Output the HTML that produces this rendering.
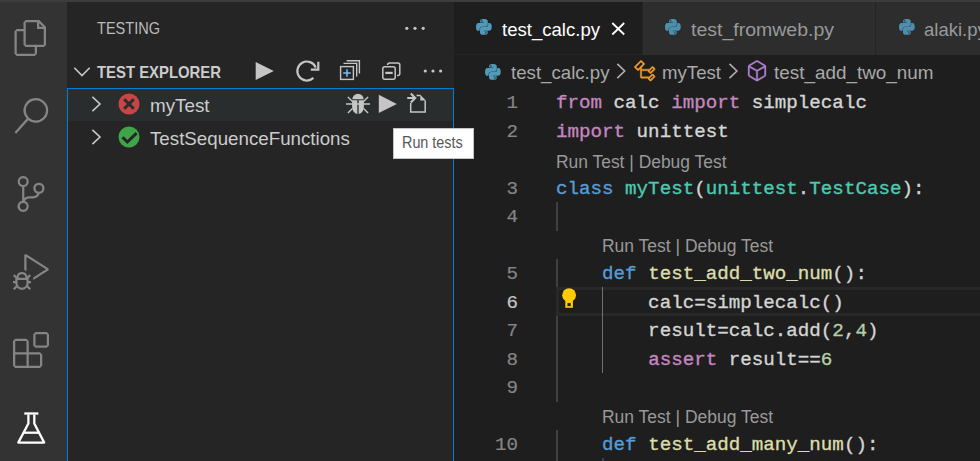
<!DOCTYPE html><html><head><meta charset="utf-8"><title>Testing</title><style>
*{box-sizing:border-box}
html,body{margin:0;padding:0;background:#1e1e1e;overflow:hidden}
#root{position:relative;width:980px;height:461px;overflow:hidden;background:#1e1e1e;font-family:"Liberation Sans",sans-serif}
.a{position:absolute}
.t{position:absolute;white-space:pre;line-height:1;transform-origin:0 50%}
.c{position:absolute;white-space:pre;font:19.2px/28.5px "Liberation Mono",monospace;color:#d4d4d4;left:556px;height:28.5px;-webkit-text-stroke:0.35px}
.ln{position:absolute;white-space:pre;font:19.2px/28.5px "Liberation Mono",monospace;color:#858585;-webkit-text-stroke:0.2px;width:64px;left:454px;text-align:right;height:28.5px}
.k{color:#c586c0}.b{color:#569cd6}.g{color:#4ec9b0}.f{color:#dcdcaa}.n{color:#b5cea8}
svg{position:absolute;overflow:visible}
</style></head><body><div id="root">
<div class="a" style="left:0;top:0;width:980px;height:2px;background:#3c3c3c"></div>
<div class="a" style="left:0;top:2px;width:67px;height:459px;background:#333333"></div>
<div class="a" style="left:67px;top:2px;width:387px;height:459px;background:#252526"></div>
<div class="a" style="left:454px;top:2px;width:526px;height:52.5px;background:#252526"></div>
<div class="a" style="left:454px;top:2px;width:188px;height:52px;background:#1e1e1e"></div>
<div class="a" style="left:643px;top:2px;width:232px;height:52.5px;background:#2d2d2d"></div>
<div class="a" style="left:876px;top:2px;width:104px;height:52.5px;background:#2d2d2d"></div>
<div class="a" style="left:67px;top:88px;width:387px;height:33px;background:#2a2d2e"></div>
<div class="a" style="left:67px;top:88px;width:387px;height:380px;border:1.5px solid #007fd4"></div>
<div class="a" style="left:392.6px;top:127.6px;width:81.6px;height:31.2px;background:#ffffff;border:1px solid #c4c4c4"></div>
<div class="a" style="left:556px;top:287.2px;width:430px;height:28.8px;border:3px solid #282828"></div>
<div class="a" style="left:556px;top:202px;width:1.5px;height:28.5px;background:#404040"></div>
<div class="a" style="left:556px;top:259px;width:1.5px;height:28.2px;background:#404040"></div>
<div class="a" style="left:556px;top:316px;width:1.5px;height:85.5px;background:#404040"></div>
<div class="a" style="left:556px;top:430px;width:1.5px;height:40px;background:#404040"></div>
<div class="a" style="left:601.8px;top:287px;width:1.5px;height:85.5px;background:#707070"></div>
<div class="a" style="left:602px;top:458px;width:1.5px;height:10px;background:#404040"></div>
<div class="t" id="t_testing" style="left:96.5px;top:28.4px;font-size:16.5px;font-weight:400;color:#bbbbbb;transform:translateY(-50%) scaleX(0.8809)">TESTING</div>
<div class="t" id="t_explorer" style="left:96.5px;top:71.5px;font-size:16.5px;font-weight:700;color:#cccccc;transform:translateY(-50%) scaleX(0.9016)">TEST EXPLORER</div>
<div class="t" id="t_mytest" style="left:149.8px;top:105px;font-size:19px;font-weight:400;color:#cccccc;transform:translateY(-50%) scaleX(0.9902)">myTest</div>
<div class="t" id="t_tsf" style="left:149.8px;top:138px;font-size:19px;font-weight:400;color:#cccccc;transform:translateY(-50%) scaleX(0.9857)">TestSequenceFunctions</div>
<div class="t" id="t_tip" style="left:402.0px;top:143.3px;font-size:15.6px;font-weight:400;color:#575757;transform:translateY(-50%) scaleX(0.9214)">Run tests</div>
<div class="t" id="t_tab1" style="left:502.0px;top:29px;font-size:19px;font-weight:400;color:#ffffff;transform:translateY(-50%) scaleX(0.9768)">test_calc.py</div>
<div class="t" id="t_tab2" style="left:690.5px;top:29px;font-size:19px;font-weight:400;color:#999999;transform:translateY(-50%) scaleX(1.0258)">test_fromweb.py</div>
<div class="t" id="t_tab3" style="left:924.2px;top:29px;font-size:19px;font-weight:400;color:#999999;transform:translateY(-50%) scaleX(0.9733)">alaki.py</div>
<div class="t" id="t_bc1" style="left:511.0px;top:72px;font-size:19px;font-weight:400;color:#a9a9a9;transform:translateY(-50%) scaleX(0.9818)">test_calc.py</div>
<div class="t" id="t_bc2" style="left:661.5px;top:72px;font-size:19px;font-weight:400;color:#a9a9a9;transform:translateY(-50%) scaleX(0.9803)">myTest</div>
<div class="t" id="t_bc3" style="left:773.5px;top:72px;font-size:19px;font-weight:400;color:#a9a9a9;transform:translateY(-50%) scaleX(0.9934)">test_add_two_num</div>
<div class="t" id="t_cl1" style="left:556.0px;top:163.0px;font-size:17.5px;font-weight:400;color:#999999;transform:translateY(-50%) scaleX(0.9957)">Run Test | Debug Test</div>
<div class="t" id="t_cl2" style="left:602.0px;top:247.0px;font-size:17.5px;font-weight:400;color:#999999;transform:translateY(-50%) scaleX(0.9986)">Run Test | Debug Test</div>
<div class="t" id="t_cl3" style="left:602.0px;top:418.0px;font-size:17.5px;font-weight:400;color:#999999;transform:translateY(-50%) scaleX(0.9986)">Run Test | Debug Test</div>
<div class="ln" style="top:89.30px">1</div>
<div class="c" style="top:89.30px"><span class="k">from</span> calc <span class="k">import</span> simplecalc</div>
<div class="ln" style="top:117.80px">2</div>
<div class="c" style="top:117.80px"><span class="k">import</span> unittest</div>
<div class="ln" style="top:174.80px">3</div>
<div class="c" style="top:174.80px"><span class="b">class</span> <span class="g">myTest</span>(<span class="g">unittest</span>.<span class="g">TestCase</span>):</div>
<div class="ln" style="top:203.30px">4</div>
<div class="ln" style="top:260.30px">5</div>
<div class="c" style="top:260.30px">    <span class="b">def</span> <span class="f">test_add_two_num</span>():</div>
<div class="ln" style="top:288.80px;color:#c6c6c6">6</div>
<div class="c" style="top:288.80px">        calc=simplecalc()</div>
<div class="ln" style="top:317.30px">7</div>
<div class="c" style="top:317.30px">        result=calc.add(<span class="n">2</span>,<span class="n">4</span>)</div>
<div class="ln" style="top:345.80px">8</div>
<div class="c" style="top:345.80px">        <span class="k">assert</span> result==<span class="n">6</span></div>
<div class="ln" style="top:374.30px">9</div>
<div class="ln" style="top:431.30px">10</div>
<div class="c" style="top:431.30px">    <span class="b">def</span> <span class="f">test_add_many_num</span>():</div>
<!-- activity bar icons -->
<svg style="left:13px;top:20px" width="36" height="36" viewBox="0 0 24 24" fill="#858585"><path d="M17.5 0h-9L7 1.5V6H2.5L1 7.5v15.07L2.5 24h12.07L16 22.57V18h4.7l1.3-1.43V4.5L17.5 0zm0 2.12l2.38 2.38H17.5V2.12zm-3 20.38h-12v-15H7v9.07L8.500 18h6v4.500zm6-6h-12v-15H16V6h4.500v10.500z"/></svg>
<svg style="left:13px;top:98px" width="36" height="36" viewBox="0 0 24 24" fill="#858585"><path d="M15.250 0a8.250 8.250 0 0 0-6.180 13.720L1 22.880l1.120 1 8.050-9.120A8.251 8.251 0 1 0 15.250.010V0zm0 15a6.750 6.750 0 1 1 0-13.500 6.750 6.750 0 0 1 0 13.500z"/></svg>
<svg style="left:13px;top:176px" width="36" height="36" viewBox="0 0 24 24" fill="#858585"><path d="M21.007 8.222A3.738 3.738 0 0 0 15.045 5.200a3.737 3.737 0 0 0 1.156 6.583 2.988 2.988 0 0 1-2.668 1.670h-2.990a4.456 4.456 0 0 0-2.989 1.165V7.400a3.737 3.737 0 1 0-1.494 0v9.117a3.776 3.776 0 1 0 1.816.099 2.990 2.990 0 0 1 2.668-1.667h2.990a4.484 4.484 0 0 0 4.223-3.039 3.736 3.736 0 0 0 3.250-3.687zM4.565 3.738a2.242 2.242 0 1 1 4.484 0 2.242 2.242 0 0 1-4.484 0zm4.484 16.441a2.242 2.242 0 1 1-4.484 0 2.242 2.242 0 0 1 4.484 0zm8.221-9.715a2.242 2.242 0 1 1 0-4.485 2.242 2.242 0 0 1 0 4.485z"/></svg>
<svg style="left:13px;top:254px" width="36" height="36" viewBox="0 0 24 24" fill="#858585"><path d="M10.940 13.500l-1.320 1.320a3.730 3.730 0 0 0-7.240 0L1.060 13.500 0 14.560l1.720 1.720-.220.220V18H0v1.500h1.500v.080c.077.489.214.966.410 1.420L0 22.940 1.060 24l1.650-1.650A4.308 4.308 0 0 0 6 24a4.310 4.310 0 0 0 3.290-1.650L10.940 24 12 22.940 10.090 21c.198-.464.336-.951.410-1.450v-.100H12V18h-1.500v-1.500l-.220-.220L12 14.560l-1.060-1.060zM6 13.500a2.250 2.250 0 0 1 2.250 2.250h-4.500A2.250 2.250 0 0 1 6 13.500zm3 6a3.330 3.330 0 0 1-3 3 3.330 3.330 0 0 1-3-3v-2.250h6v2.250zm14.760-9.900v1.260L13.500 17.370V15.600l8.500-5.370L9 2v9.460a5.070 5.070 0 0 0-1.500-.720V.630L8.640 0l15.120 9.600z"/></svg>
<svg style="left:13px;top:332px" width="36" height="36" viewBox="0 0 24 24" fill="#858585"><path d="M13.500 1.500L15 0h7.500L24 1.500V9l-1.500 1.500H15L13.500 9V1.500zm1.500 0V9h7.500V1.500H15zM0 15V6l1.500-1.500H9L10.500 6v7.500H18l1.500 1.500v7.500L18 24H1.500L0 22.500V15zm9-1.500V6H1.500v7.500H9zM9 15H1.500v7.500H9V15zm1.500 7.500H18V15h-7.500v7.500z"/></svg>
<!-- beaker -->
<svg style="left:0;top:0" width="980" height="461" viewBox="0 0 980 461" fill="none" stroke="#ffffff" stroke-width="2.3" stroke-linejoin="round" stroke-linecap="butt">
<path d="M24.300 413.500H38.400"/>
<path d="M28.400 414.500V423.500L18.300 442.600H44.200L34.300 423.500V414.500"/>
<path d="M23.500 432.700H39.300"/>
</svg>
<!-- sidebar icons (absolute coords) -->
<svg style="left:0;top:0" width="980" height="461" viewBox="0 0 980 461">
<g fill="#c5c5c5">
<circle cx="406.800" cy="28.300" r="1.600"/><circle cx="415" cy="28.300" r="1.600"/><circle cx="423.200" cy="28.300" r="1.600"/>
<circle cx="425.300" cy="71" r="1.600"/><circle cx="433" cy="71" r="1.600"/><circle cx="440.600" cy="71" r="1.600"/>
<path d="M255.700 61.900L273.800 71L255.700 80.100Z"/>
<path d="M378.800 94.800L396.800 104L378.800 113.100Z"/>
</g>
<g fill="none" stroke="#c8c8c8" stroke-width="1.600">
<path d="M74.300 67.800L82 75.600L89.700 67.800"/>
<path d="M92.400 96.900L100 104L92.400 111.100"/>
<path d="M92.400 129.900L100 137L92.400 144.100"/>
</g>
<!-- refresh -->
<g fill="none" stroke="#c5c5c5" stroke-width="2.200">
<path d="M315.700 67.600A9.500 9.500 0 1 0 313.400 77.900"/>
<path d="M318.300 61.800V69.600H310.800"/>
</g>
<!-- expand all -->
<g fill="none" stroke="#c5c5c5" stroke-width="1.400">
<rect x="340.600" y="66.600" width="12.800" height="12.800"/>
<path d="M343.500 63.400H356.700V76.600"/>
<path d="M346.700 60.800H359.400V73.500"/>
</g>
<path d="M343.200 73H350.800M347 69.200V76.800" stroke="#75beff" stroke-width="1.500" fill="none"/>
<!-- collapse all -->
<g fill="none" stroke="#c5c5c5" stroke-width="1.500">
<rect x="382.800" y="66.800" width="12.400" height="12.400" rx="2"/>
<path d="M387.600 64V65.100Q387.600 63.100 389.600 63.100H397.800Q399.800 63.100 399.800 65.100V73.400Q399.800 75.400 397.800 75.400H397"/>
<path d="M385.300 72.900H392.700" stroke-width="2.200"/>
</g>
<!-- bug -->
<g fill="#c5c5c5">
<path d="M352.300 99.300A5.700 5.500 0 0 1 363.700 99.300Z"/>
<path d="M352.100 100.300H357.300V113.900A5.800 7 0 0 1 352.100 107Z"/>
<path d="M363.900 100.300H358.700V113.900A5.800 7 0 0 0 363.900 107Z"/>
</g>
<g fill="none" stroke="#c5c5c5" stroke-width="1.400">
<path d="M346 104H370M347.900 97L352.500 101.500M368.100 97L363.500 101.500M352.500 108.500L347.900 113M363.500 108.500L368.100 113"/>
</g>
<!-- go to file -->
<g fill="none" stroke="#c5c5c5" stroke-width="1.500">
<path d="M410.700 103V112H425.200V100.500"/>
<path d="M416.500 95.500H420.500"/>
<path d="M407.200 98H414.500M410.800 93.600L415.200 98L410.800 102.400" stroke-width="2.100"/>
</g>
<path d="M420.300 94.800L425.900 100.500H420.300Z" fill="#c5c5c5"/>
<!-- test state icons -->
<circle cx="129" cy="104" r="10.500" fill="#c74545"/>
<path d="M124.200 99.200L133.800 108.800M133.800 99.200L124.200 108.800" stroke="#2a2d2e" stroke-width="3" fill="none"/>
<circle cx="129" cy="137" r="10.500" fill="#3fa548"/>
<path d="M122.500 137.200L127.300 142L136.600 133.200" stroke="#252526" stroke-width="3" fill="none"/>
</svg>
<!-- editor icons -->
<svg style="left:475.600px;top:19.400px;opacity:1" width="15.800" height="15.800" viewBox="0 0 16 16" fill="#519aba" fill-rule="evenodd"><path d="M7.960 0C7.290 0 6.660 0.060 6.100 0.160C4.470 0.450 4.160 1.060 4.160 2.180V3.650H8.050V4.150H2.710C1.580 4.150 0.590 4.830 0.280 6.120C-0.070 7.580 -0.090 8.500 0.280 10.030C0.550 11.180 1.220 12 2.350 12H3.680V10.220C3.680 8.930 4.800 7.800 6.100 7.800H9.990C11.060 7.800 11.930 6.920 11.930 5.830V2.180C11.930 1.120 11.050 0.330 9.990 0.160C9.320 0.040 8.630 0 7.960 0ZM5.900 1.150A0.750 0.750 0 1 1 5.900 2.650A0.750 0.750 0 1 1 5.900 1.150Z"/><g transform="rotate(180 8 8)"><path d="M7.960 0C7.290 0 6.660 0.060 6.100 0.160C4.470 0.450 4.160 1.060 4.160 2.180V3.650H8.050V4.150H2.710C1.580 4.150 0.590 4.830 0.280 6.120C-0.070 7.580 -0.090 8.500 0.280 10.030C0.550 11.180 1.220 12 2.350 12H3.680V10.220C3.680 8.930 4.800 7.800 6.100 7.800H9.990C11.060 7.800 11.930 6.920 11.930 5.830V2.180C11.930 1.120 11.050 0.330 9.990 0.160C9.320 0.040 8.630 0 7.960 0ZM5.900 1.150A0.750 0.750 0 1 1 5.900 2.650A0.750 0.750 0 1 1 5.900 1.150Z"/></g></svg>
<svg style="left:665px;top:19.400px;opacity:0.900" width="15.800" height="15.800" viewBox="0 0 16 16" fill="#519aba" fill-rule="evenodd"><path d="M7.960 0C7.290 0 6.660 0.060 6.100 0.160C4.470 0.450 4.160 1.060 4.160 2.180V3.650H8.050V4.150H2.710C1.580 4.150 0.590 4.830 0.280 6.120C-0.070 7.580 -0.090 8.500 0.280 10.030C0.550 11.180 1.220 12 2.350 12H3.680V10.220C3.680 8.930 4.800 7.800 6.100 7.800H9.990C11.060 7.800 11.930 6.920 11.930 5.830V2.180C11.930 1.120 11.050 0.330 9.990 0.160C9.320 0.040 8.630 0 7.960 0ZM5.900 1.150A0.750 0.750 0 1 1 5.900 2.650A0.750 0.750 0 1 1 5.900 1.150Z"/><g transform="rotate(180 8 8)"><path d="M7.960 0C7.290 0 6.660 0.060 6.100 0.160C4.470 0.450 4.160 1.060 4.160 2.180V3.650H8.050V4.150H2.710C1.580 4.150 0.590 4.830 0.280 6.120C-0.070 7.580 -0.090 8.500 0.280 10.030C0.550 11.180 1.220 12 2.350 12H3.680V10.220C3.680 8.930 4.800 7.800 6.100 7.800H9.990C11.060 7.800 11.930 6.920 11.930 5.830V2.180C11.930 1.120 11.050 0.330 9.990 0.160C9.320 0.040 8.630 0 7.960 0ZM5.900 1.150A0.750 0.750 0 1 1 5.900 2.650A0.750 0.750 0 1 1 5.900 1.150Z"/></g></svg>
<svg style="left:898.700px;top:19.400px;opacity:0.900" width="15.800" height="15.800" viewBox="0 0 16 16" fill="#519aba" fill-rule="evenodd"><path d="M7.960 0C7.290 0 6.660 0.060 6.100 0.160C4.470 0.450 4.160 1.060 4.160 2.180V3.650H8.050V4.150H2.710C1.580 4.150 0.590 4.830 0.280 6.120C-0.070 7.580 -0.090 8.500 0.280 10.030C0.550 11.180 1.220 12 2.350 12H3.680V10.220C3.680 8.930 4.800 7.800 6.100 7.800H9.990C11.060 7.800 11.930 6.920 11.930 5.830V2.180C11.930 1.120 11.050 0.330 9.990 0.160C9.320 0.040 8.630 0 7.960 0ZM5.900 1.150A0.750 0.750 0 1 1 5.900 2.650A0.750 0.750 0 1 1 5.900 1.150Z"/><g transform="rotate(180 8 8)"><path d="M7.960 0C7.290 0 6.660 0.060 6.100 0.160C4.470 0.450 4.160 1.060 4.160 2.180V3.650H8.050V4.150H2.710C1.580 4.150 0.590 4.830 0.280 6.120C-0.070 7.580 -0.090 8.500 0.280 10.030C0.550 11.180 1.220 12 2.350 12H3.680V10.220C3.680 8.930 4.800 7.800 6.100 7.800H9.990C11.060 7.800 11.930 6.920 11.930 5.830V2.180C11.930 1.120 11.050 0.330 9.990 0.160C9.320 0.040 8.630 0 7.960 0ZM5.900 1.150A0.750 0.750 0 1 1 5.900 2.650A0.750 0.750 0 1 1 5.900 1.150Z"/></g></svg>
<svg style="left:485px;top:64.100px;opacity:1" width="15.800" height="15.800" viewBox="0 0 16 16" fill="#519aba" fill-rule="evenodd"><path d="M7.960 0C7.290 0 6.660 0.060 6.100 0.160C4.470 0.450 4.160 1.060 4.160 2.180V3.650H8.050V4.150H2.710C1.580 4.150 0.590 4.830 0.280 6.120C-0.070 7.580 -0.090 8.500 0.280 10.030C0.550 11.180 1.220 12 2.350 12H3.680V10.220C3.680 8.930 4.800 7.800 6.100 7.800H9.990C11.060 7.800 11.930 6.920 11.930 5.830V2.180C11.930 1.120 11.050 0.330 9.990 0.160C9.320 0.040 8.630 0 7.960 0ZM5.900 1.150A0.750 0.750 0 1 1 5.900 2.650A0.750 0.750 0 1 1 5.900 1.150Z"/><g transform="rotate(180 8 8)"><path d="M7.960 0C7.290 0 6.660 0.060 6.100 0.160C4.470 0.450 4.160 1.060 4.160 2.180V3.650H8.050V4.150H2.710C1.580 4.150 0.590 4.830 0.280 6.120C-0.070 7.580 -0.090 8.500 0.280 10.030C0.550 11.180 1.220 12 2.350 12H3.680V10.220C3.680 8.930 4.800 7.800 6.100 7.800H9.990C11.060 7.800 11.930 6.920 11.930 5.830V2.180C11.930 1.120 11.050 0.330 9.990 0.160C9.320 0.040 8.630 0 7.960 0ZM5.900 1.150A0.750 0.750 0 1 1 5.900 2.650A0.750 0.750 0 1 1 5.900 1.150Z"/></g></svg>
<svg style="left:0;top:0" width="980" height="461" viewBox="0 0 980 461">
<path d="M612.300 23L624.200 34.500M624.200 23L612.300 34.500" stroke="#ffffff" stroke-width="1.800" fill="none"/>
<g fill="none" stroke="#b0b0b0" stroke-width="1.600">
<path d="M617.300 63.900L624.700 71L617.300 78.100"/>
<path d="M729.500 63.900L736.900 71L729.500 78.100"/>
</g>
<!-- lightbulb -->
<circle cx="569.100" cy="295.200" r="6.900" fill="#ffcc00"/>
<path d="M565.300 298H572.900V307.800H565.300Z" fill="#ffcc00"/>
<rect x="567.500" y="303.100" width="3.200" height="3" fill="#1e1e1e"/>
</svg>
<svg style="left:633.300px;top:58.700px" width="24" height="24" viewBox="0 0 16 16" fill="#ee9d28" stroke="#ee9d28" stroke-width="0.250"><path d="M11.340 9.710h.710l2.670-2.670v-.710L13.380 5h-.700l-1.820 1.810h-5V5.560l1.860-1.850V3l-2-2H5L1 5v.710l2 2h.710l1.140-1.150v5.790l.500.500H10v.520l1.330 1.340h.710l2.670-2.670v-.710L13.370 10h-.700l-1.860 1.850h-5v-4H10v.480l1.340 1.380zm1.690-3.650l.630.630-2 2-.630-.630 2-2zm0 5l.630.630-2 2-.630-.630 2-2zM3.350 6.650l-1.290-1.300 3.290-3.290 1.300 1.290-3.300 3.300z"/></svg>
<svg style="left:744.600px;top:58.600px" width="24" height="24" viewBox="0 0 16 16" fill="#b180d7" stroke="#b180d7" stroke-width="0.200"><path d="M13.510 4l-5-3h-1l-5 3-.490.860v6l.490.850 5 3h1l5-3 .490-.850v-6L13.510 4zm-6 9.560l-4.500-2.700V5.700l4.500 2.450v5.410zM3.270 4.700l4.740-2.840 4.740 2.840-4.740 2.590L3.270 4.700zm9.740 6.160l-4.500 2.700V8.150l4.500-2.450v5.160z"/></svg>

</div></body></html>
